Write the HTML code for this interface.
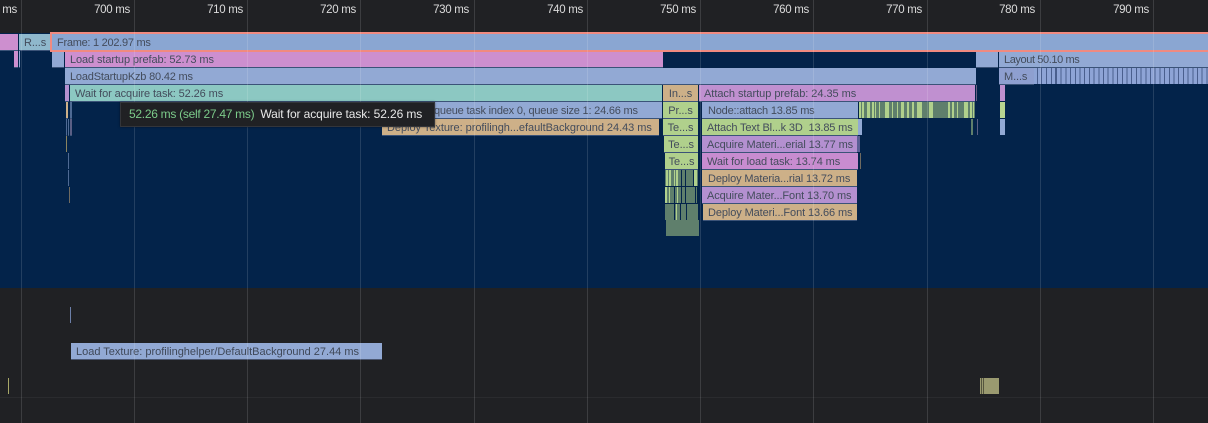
<!DOCTYPE html>
<html><head><meta charset="utf-8">
<style>
html,body{margin:0;padding:0;background:#202124;width:1208px;height:423px;overflow:hidden}
body{position:relative;font-family:"Liberation Sans",sans-serif}
div{position:absolute;box-sizing:border-box}
.main{left:0;top:33px;width:1208px;height:255px;background:#03234a}
.g{top:0;width:1px;height:423px;background:rgba(255,255,255,.13);z-index:5}
.t{top:3px;height:14px;font-size:11.5px;line-height:14px;color:#dcdcdc;text-align:right;width:60px;z-index:6;letter-spacing:-.3px}
.b{height:16px;font-size:11px;line-height:18px;color:#434c5c;white-space:nowrap;overflow:hidden;padding-left:5px;letter-spacing:-.1px;z-index:2;box-shadow:0 1px 0 #3b5378}
.bl{background:#92a9d4}.pk{background:#cd8fcf}.tl{background:#8cc8c2}.gr{background:#b0d08c}.tn{background:#cdb088}.pu{background:#b490d0}
.c{text-align:center;padding:0}
.s{height:16px;z-index:2}
</style></head><body>
<div class="main"></div>

<div class="t" style="left:-43px">ms</div>
<div class="t" style="left:70px">700 ms</div>
<div class="t" style="left:183px">710 ms</div>
<div class="t" style="left:296px">720 ms</div>
<div class="t" style="left:409px">730 ms</div>
<div class="t" style="left:523px">740 ms</div>
<div class="t" style="left:636px">750 ms</div>
<div class="t" style="left:749px">760 ms</div>
<div class="t" style="left:862px">770 ms</div>
<div class="t" style="left:975px">780 ms</div>
<div class="t" style="left:1089px">790 ms</div>

<div class="g" style="left:21px"></div><div class="g" style="left:134px"></div><div class="g" style="left:247px"></div><div class="g" style="left:360px"></div><div class="g" style="left:474px"></div><div class="g" style="left:587px"></div><div class="g" style="left:700px"></div><div class="g" style="left:813px"></div><div class="g" style="left:927px"></div><div class="g" style="left:1040px"></div><div class="g" style="left:1153px"></div>
<div style="left:0;top:397px;width:1208px;height:1px;background:#2a2b2e"></div>

<!-- row 0 -->
<div class="b pk" style="left:0;top:34px;width:18px;padding:0"></div>
<div class="b" style="left:19px;top:34px;width:31px;padding-left:5px;background:#8fb8cc">R...s</div>
<div class="b bl" style="left:50px;top:32px;width:1160px;height:20px;border:2px solid #f08a80;padding-left:5px;background:#8aa6d2;z-index:4;box-shadow:none;letter-spacing:-.27px">Frame: 1 202.97 ms</div>

<!-- row 1 -->
<div class="b pk" style="left:14px;top:51px;width:4px;padding:0"></div>
<div class="b bl" style="left:19px;top:51px;width:1px;padding:0"></div>
<div class="b bl" style="left:52px;top:51px;width:12px;padding:0"></div>
<div class="b pk" style="left:65px;top:51px;width:598px">Load startup prefab: 52.73 ms</div>
<div class="b bl" style="left:976px;top:51px;width:22px;padding:0"></div>
<div class="b bl" style="left:999px;top:51px;width:209px;letter-spacing:-.4px">Layout 50.10 ms</div>

<!-- row 2 -->
<div class="b bl" style="left:65px;top:68px;width:911px;letter-spacing:-.19px">LoadStartupKzb 80.42 ms</div>
<div class="b" style="left:999px;top:68px;width:35px;background:#8e9fd0;padding-left:5px">M...s</div>
<div class="s" style="left:1034px;top:68px;width:174px;background:linear-gradient(90deg,#8ea4d6 0 3px,#4a5f8e 3px 4px,#8ea4d6 4px 7px,#4a5f8e 7px 8px,#8ea4d6 8px 12px,#4a5f8e 12px 13px,#8ea4d6 13px 17px,#4a5f8e 17px 18px,#8ea4d6 18px 21px,#4a5f8e 21px 23px,transparent 23px)"></div>
<div class="s" style="left:1057px;top:68px;width:151px;background:repeating-linear-gradient(90deg,#8ea4d6 0,#8ea4d6 3.7px,#4a5f8e 3.7px,#4a5f8e 4.7px)"></div>

<!-- row 3 -->
<div class="b pu" style="left:65px;top:85px;width:4px;padding:0"></div>
<div class="b tl" style="left:70px;top:85px;width:592px">Wait for acquire task: 52.26 ms</div>
<div class="b tn c" style="left:663px;top:85px;width:35px">In...s</div>
<div class="b" style="left:699px;top:85px;width:276px;padding-left:5px;background:#c090d0;letter-spacing:-.04px">Attach startup prefab: 24.35 ms</div>
<div class="s" style="left:976px;top:85px;width:1px;background:#6a5f86"></div>
<div class="s" style="left:1000px;top:85px;width:5px;background:#c090d0"></div>

<!-- row 4 -->
<div class="b tn" style="left:66px;top:102px;width:2px;padding:0"></div>
<div class="b" style="left:70px;top:102px;width:2px;padding:0;background:#4f6a94"></div>
<div class="b bl" style="left:120px;top:102px;width:542px;padding-left:314px;letter-spacing:-.2px">queue task index 0, queue size 1: 24.66 ms</div>
<div class="b gr c" style="left:663px;top:102px;width:35px">Pr...s</div>
<div class="b bl" style="left:702px;top:102px;width:156px;padding-left:6px;letter-spacing:-.2px">Node::attach 13.85 ms</div>
<div class="s" style="left:859px;top:102px;width:116px;background:linear-gradient(90deg,#b0d08c 0 2px,#5f7f6c 2px 3px,#b0d08c 3px 5px,#5f7f6c 5px 8px,#b0d08c 8px 11px,#5f7f6c 11px 13px,#b0d08c 13px 15px,#5f7f6c 15px 16px,#b0d08c 16px 17px,#5f7f6c 17px 20px,#b0d08c 20px 21px,#5f7f6c 21px 26px,#b0d08c 26px 30px,#5f7f6c 30px 33px,#b0d08c 33px 34px,#5f7f6c 34px 38px,#b0d08c 38px 39px,#5f7f6c 39px 42px,#b0d08c 42px 45px,#5f7f6c 45px 48px,#b0d08c 48px 50px,#5f7f6c 50px 53px,#b0d08c 53px 55px,#5f7f6c 55px 58px,#b0d08c 58px 63px,#5f7f6c 63px 70px,#b0d08c 70px 74px,#5f7f6c 74px 89px,#b0d08c 89px 91px,#5f7f6c 91px 93px,#b0d08c 93px 95px,#5f7f6c 95px 98px,#b0d08c 98px 99px,#5f7f6c 99px 105px,#b0d08c 105px 109px,#5f7f6c 109px 111px,#b0d08c 111px 113px,#5f7f6c 113px 114px,#b0d08c 114px 115px,#5f7f6c 115px)"></div>
<div class="s" style="left:1000px;top:102px;width:5px;background:#b8d490"></div>

<!-- row 5 -->
<div class="b" style="left:66px;top:119px;width:1px;padding:0;background:#4f6a94"></div>
<div class="b" style="left:68px;top:119px;width:1px;padding:0;background:#4f6a94"></div>
<div class="b" style="left:70px;top:119px;width:2px;padding:0;background:#5b5f85"></div>
<div class="b tn" style="left:382px;top:119px;width:277px;letter-spacing:-.04px">Deploy Texture: profilingh...efaultBackground 24.43 ms</div>
<div class="b gr c" style="left:663px;top:119px;width:35px">Te...s</div>
<div class="b gr" style="left:702px;top:119px;width:156px;padding-left:5px;letter-spacing:-.15px">Attach Text Bl...k 3D&nbsp; 13.85 ms</div>
<div class="s" style="left:858px;top:119px;width:4px;background:#92a9d4"></div>
<div class="s" style="left:971px;top:119px;width:2px;background:#5f7f6c"></div>
<div class="s" style="left:977px;top:119px;width:1px;background:#5b5f85"></div>
<div class="s" style="left:1000px;top:119px;width:5px;background:#92a9d4"></div>

<!-- row 6 -->
<div class="s" style="left:66px;top:136px;width:1px;background:#8a8460"></div>
<div class="b gr c" style="left:664px;top:136px;width:34px">Te...s</div>
<div class="b pu" style="left:702px;top:136px;width:155px;padding-left:5px">Acquire Materi...erial 13.77 ms</div>
<div class="s" style="left:857px;top:136px;width:3px;background:#5b5f95"></div>

<!-- row 7 -->
<div class="s" style="left:68px;top:153px;width:1px;background:#4f6a94"></div>
<div class="b gr c" style="left:665px;top:153px;width:33px">Te...s</div>
<div class="b" style="left:702px;top:153px;width:156px;padding-left:5px;background:#c88cd0">Wait for load task: 13.74 ms</div>
<div class="s" style="left:860px;top:153px;width:1px;background:#6f6a60"></div>

<!-- row 8 -->
<div class="s" style="left:68px;top:170px;width:1px;background:#4f6a94"></div>
<div class="s" style="left:665px;top:170px;width:33px;background:linear-gradient(90deg,#5f7f6c 0 1px,#b0d08c 1px 3px,#5f7f6c 3px 4px,#b0d08c 4px 6px,#5f7f6c 6px 9px,#b0d08c 9px 10px,#5f7f6c 10px 11px,#b0d08c 11px 13px,#5f7f6c 13px 16px,#03234a 16px 17px,#5f7f6c 17px 20px,#03234a 20px 21px,#5f7f6c 21px 28px,#03234a 28px 29px,#b0d08c 29px 32px,#5f7f6c 32px)"></div>
<div class="b tn" style="left:702px;top:170px;width:155px;padding-left:6px;letter-spacing:-.13px">Deploy Materia...rial 13.72 ms</div>

<!-- row 9 -->
<div class="s" style="left:69px;top:187px;width:1px;background:#6f6a60"></div>
<div class="s" style="left:665px;top:187px;width:33px;background:linear-gradient(90deg,#b0d08c 0 2px,#5f7f6c 2px 4px,#b0d08c 4px 5px,#5f7f6c 5px 9px,#03234a 9px 10px,#5f7f6c 10px 12px,#b0d08c 12px 13px,#5f7f6c 13px 16px,#03234a 16px 17px,#5f7f6c 17px 20px,#03234a 20px 21px,#5f7f6c 21px 30px,#03234a 30px 31px,#5f7f6c 31px 32px,#03234a 32px 33px)"></div>
<div class="b pu" style="left:702px;top:187px;width:155px;padding-left:5px">Acquire Mater...Font 13.70 ms</div>

<!-- row 10 -->
<div class="s" style="left:665px;top:204px;width:33px;background:linear-gradient(90deg,#5f7f6c 0 9px,#03234a 9px 10px,#5f7f6c 10px 11px,#b0d08c 11px 12px,#5f7f6c 12px 15px,#03234a 15px 16px,#5f7f6c 16px 21px,#03234a 21px 22px,#5f7f6c 22px)"></div>
<div class="b tn" style="left:703px;top:204px;width:154px;padding-left:5px">Deploy Materi...Font 13.66 ms</div>

<!-- row 11 -->
<div class="s" style="left:666px;top:220px;width:33px;background:#5f7f6c"></div>

<!-- bottom -->
<div class="s" style="left:70px;top:307px;width:1px;background:#6c7fa8"></div>
<div class="b" style="left:71px;top:343px;width:311px;background:#92a9d4;padding-left:5px;color:#3f4858;box-shadow:0 1px 0 #4a5670;letter-spacing:-.01px">Load Texture: profilinghelper/DefaultBackground 27.44 ms</div>
<div class="s" style="left:8px;top:378px;width:1px;background:#a8a868"></div>
<div class="s" style="left:980px;top:378px;width:19px;background:linear-gradient(90deg,#9a9a70 0 1px,#55553f 1px 2px,#9a9a70 2px 3px,#55553f 3px 4px,#9a9a70 4px)"></div>

<!-- tooltip -->
<div style="left:120px;top:102px;width:315px;height:25px;background:#202124;border:1px solid #33353a;box-shadow:0 0 2px rgba(0,0,0,.5);z-index:8;font-size:12px;line-height:23px;white-space:nowrap;padding-left:8px;color:#e8e8e8;letter-spacing:-.1px"><span style="color:#7ccb8a;letter-spacing:-.28px">52.26 ms (self 27.47 ms)</span><span style="margin-left:6px">Wait for acquire task: 52.26 ms</span></div>
</body></html>
